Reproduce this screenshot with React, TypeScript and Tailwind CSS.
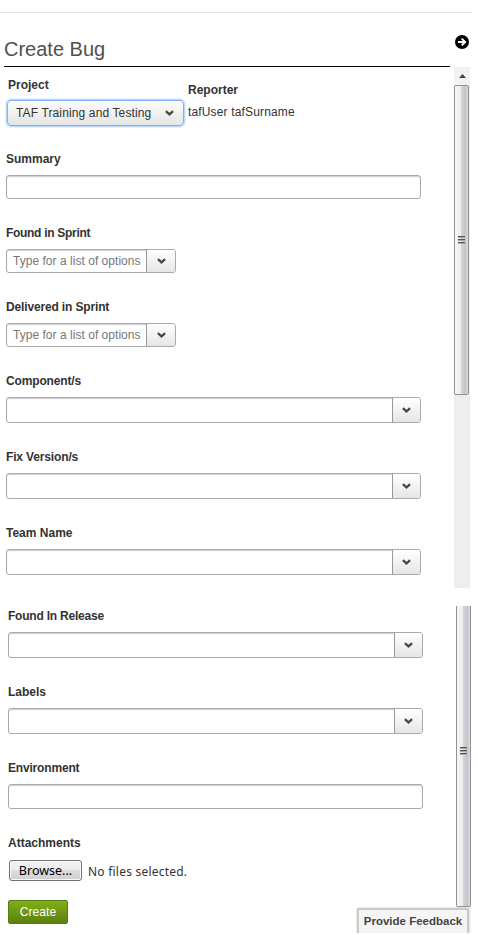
import React from "react";

const Chevron = () => (
  <svg width="9" height="6" viewBox="0 0 9 6" fill="none" aria-hidden="true">
    <path d="M0.9 1.1 4.5 4.4 8.1 1.1" stroke="#484848" strokeWidth="2.2" />
  </svg>
);

const Label = ({ children, tracking = "" }: { children: React.ReactNode; tracking?: string }) => (
  <div className={`${tracking} h-4 text-[12px] leading-4 font-bold whitespace-nowrap text-[#333]`}>{children}</div>
);

type FieldProps = {
  label: string;
  size?: string;
  combo?: boolean;
  placeholder?: string;
  tracking?: string;
};

function Field({ label, size = "h-[26px] w-[415px]", combo = false, placeholder, tracking }: FieldProps) {
  return (
    <div className="flex flex-col gap-2 pt-px">
      <Label tracking={tracking}>{label}</Label>
      <div
        className={`${size} flex overflow-hidden rounded-[3px] border border-[#aaa] bg-white shadow-[inset_0_1px_1px_#ccc]`}
      >
        <input
          aria-label={label}
          placeholder={placeholder}
          className="min-w-0 flex-1 bg-transparent pl-1.5 text-[12px] tracking-[0.03px] outline-none placeholder:text-[#777]"
        />
        {combo && (
          <button
            className={`${placeholder ? "w-[29px]" : "w-7"} flex shrink-0 items-center justify-center border-l border-[#999] bg-linear-to-b from-white to-[#e6e6e6]`}
          >
            <Chevron />
          </button>
        )}
      </div>
    </div>
  );
}

const Thumb = ({ className }: { className: string }) => (
  <div
    className={`${className} flex w-[15px] flex-col items-center gap-px border-x border-[#929296] bg-[linear-gradient(90deg,#f7f7f7_0%,#eeeeef_42%,#d5d5d9_48%,#c4c4ca_80%,#dedee0_100%)]`}
  >
    {[0, 1, 2].map((i) => (
      <div key={i} className="h-[2px] w-[7px] border-t border-[#555] bg-[#aaa]" />
    ))}
  </div>
);

export default function App() {
  return (
    <div className="h-[935px] w-[478px] overflow-hidden bg-white font-['Liberation_Sans',Arial,sans-serif] text-[12px] text-[#333]">
      <div className="h-[13px] w-[473px] border-b border-[#e5e5e5]" />
      <header className="flex h-[54px] justify-between pr-[9px] pl-1">
        <h1 className="w-[446px] border-b border-black pt-6 text-[20px] leading-6 text-[#505050]">Create Bug</h1>
        <svg className="-ml-4 mt-[22px] shrink-0" width="14" height="14" viewBox="0 0 14 14" fill="none">
          <circle cx="7" cy="7" r="7" fill="#000" />
          <path d="M3 7h6.5M6.7 3.6 10.1 7l-3.4 3.4" stroke="#fff" strokeWidth="2" />
        </svg>
      </header>

      <section className="flex h-[521px]">
        <div className="w-[454px] pl-1.5">
          <div className="flex h-[83px]">
            <div className="w-[182px] pt-[10px]">
              <div className="pl-0.5">
                <Label>Project</Label>
              </div>
              <button className="mt-[7px] ml-px flex h-[26px] w-[177px] items-center justify-between rounded-[4px] border border-[#80aef5] bg-linear-to-b from-[#fdfdfd] to-[#e5e5e5] pr-[9px] pl-2 text-[12px] tracking-[0.13px] whitespace-nowrap shadow-[0_0_2px_1px_#a5cafa]">
                TAF Training and Testing
                <Chevron />
              </button>
            </div>
            <div className="pt-[15px]">
              <Label>Reporter</Label>
              <div className="mt-1.5 leading-4 tracking-[0.15px] whitespace-nowrap">tafUser tafSurname</div>
            </div>
          </div>
          <div className="flex flex-col gap-[25px]">
            <Field label="Summary" size="h-6 w-[415px]" />
            <Field label="Found in Sprint" size="h-6 w-[170px]" combo tracking="tracking-[-0.3px]" placeholder="Type for a list of options" />
            <Field label="Delivered in Sprint" size="h-6 w-[170px]" combo tracking="tracking-[-0.15px]" placeholder="Type for a list of options" />
            <Field label="Component/s" combo tracking="tracking-[-0.15px]" />
            <Field label="Fix Version/s" combo tracking="tracking-[-0.15px]" />
            <Field label="Team Name" combo />
          </div>
        </div>
        <div className="flex w-4 flex-col bg-[#eee]">
          <div className="flex h-[18px] items-center justify-center bg-[#f2f2f2]">
            <svg width="7" height="4" viewBox="0 0 7 4">
              <path d="M3.5 0 7 4H0Z" fill="#444" />
            </svg>
          </div>
          <Thumb className="h-[310px] rounded-[2px] border-y pt-[150px]" />
        </div>
      </section>

      <section className="mt-[18px] flex h-[327px]">
        <div className="w-[456px] pt-px pl-2">
          <div className="flex flex-col gap-[25px]">
            <Field label="Found In Release" combo tracking="tracking-[-0.22px]" />
            <Field label="Labels" combo />
            <Field label="Environment" size="h-[25px] w-[415px]" tracking="tracking-[-0.18px]" />
            <div className="pt-px">
              <Label>Attachments</Label>
              <div className="mt-[9px] ml-px flex items-center gap-1.5 font-['Noto_Sans',sans-serif] text-[12px] whitespace-nowrap">
                <button className="h-[21px] w-[73px] rounded-[3px] border border-[#707070] bg-[linear-gradient(#f2f2f2_0%,#ebebeb_48%,#dddddd_50%,#cfcfcf_100%)] text-[12.5px] leading-[18px] text-black shadow-[inset_0_0_0_1px_#fafafa]">
                  Browse...
                </button>
                <span className="pt-0.5 leading-[19px] tracking-[0.22px]">No files selected.</span>
              </div>
              <button className="mt-[19px] h-6 w-[60px] rounded-[2px] border border-[#557c12] bg-linear-to-b from-[#82ae17] to-[#5b8010] text-[12px] tracking-[0.1px] text-white">
                Create
              </button>
            </div>
          </div>
        </div>
        <div className="relative w-[15px] bg-[#f4f4f4]">
          <Thumb className="h-[301px] rounded-b-[2px] border-b pt-[141px]" />
          <div className="absolute right-0 bottom-0 h-[28px] w-[120px] overflow-hidden pt-[3px] pl-[6px]">
            <button className="h-[30px] w-[112px] rounded-t-[2px] border-2 border-[#cacaca] bg-[#f5f5f5] pb-[3px] text-[11.5px] font-bold whitespace-nowrap text-[#444] shadow-[0_0_2px_#bbb]">
              Provide Feedback
            </button>
          </div>
        </div>
      </section>
    </div>
  );
}
